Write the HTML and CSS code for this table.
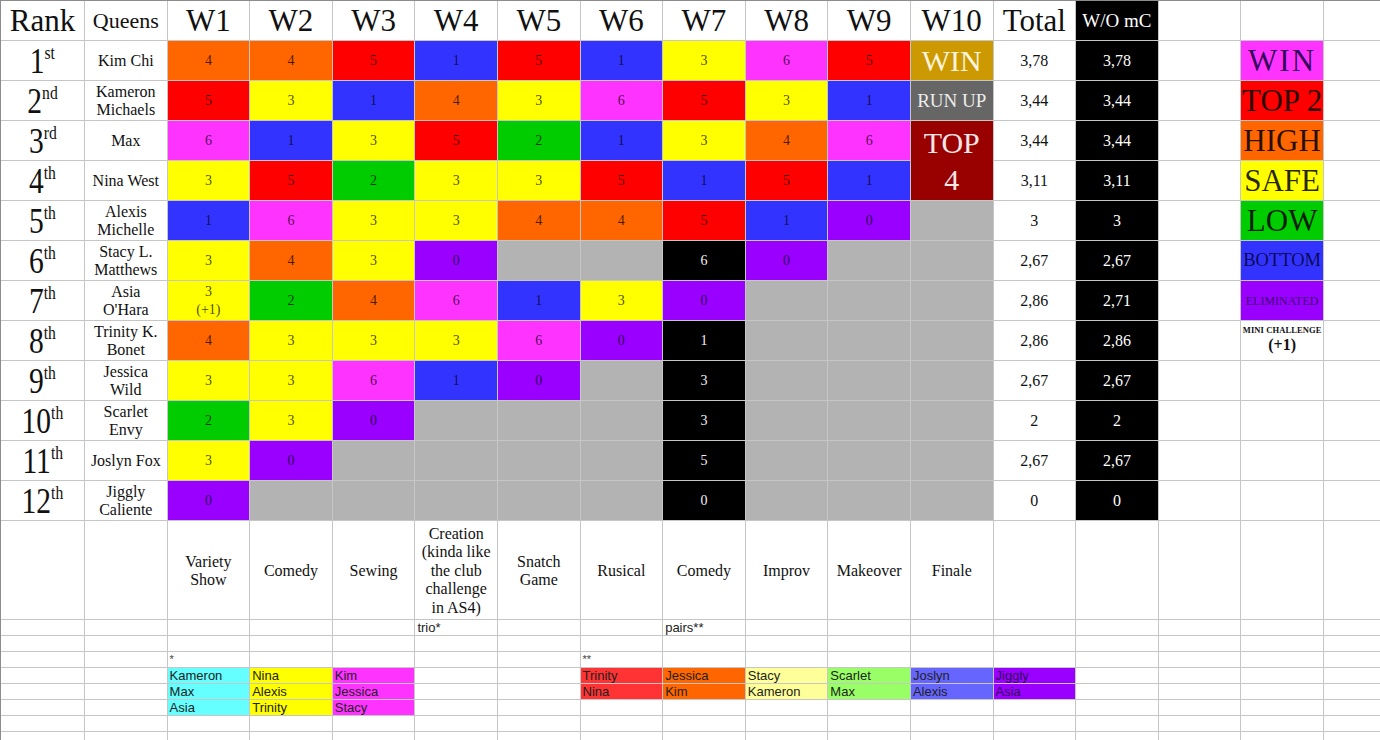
FILE: index.html
```html
<!DOCTYPE html>
<html lang="en">
<head>
<meta charset="utf-8">
<title>Drag Race Tracker</title>
<link rel="stylesheet" href="styles.css">
</head>
<body>
<div class="sheet">
  <!-- header -->
  <div class="c hd">Rank</div><div class="c hq">Queens</div>
  <div class="c hd">W1</div><div class="c hd">W2</div><div class="c hd">W3</div><div class="c hd">W4</div><div class="c hd">W5</div><div class="c hd">W6</div><div class="c hd">W7</div><div class="c hd">W8</div><div class="c hd">W9</div><div class="c hd">W10</div>
  <div class="c hd">Total</div><div class="c bk hwo">W/O mC</div><div class="c"></div><div class="c"></div><div class="c"></div>

  <!-- 1 -->
  <div class="c rk"><span class="rn">1<sup>st</sup></span></div><div class="c nm">Kim Chi</div>
  <div class="c n or">4</div><div class="c n or">4</div><div class="c n rd">5</div><div class="c n bl">1</div><div class="c n rd">5</div><div class="c n bl">1</div><div class="c n ye">3</div><div class="c n mg">6</div><div class="c n rd">5</div>
  <div class="c win10">WIN</div><div class="c tot">3,78</div><div class="c tot bk">3,78</div><div class="c"></div><div class="c lg mg lwin">WIN</div><div class="c"></div>

  <!-- 2 -->
  <div class="c rk"><span class="rn">2<sup>nd</sup></span></div><div class="c nm">Kameron<br>Michaels</div>
  <div class="c n rd">5</div><div class="c n ye">3</div><div class="c n bl">1</div><div class="c n or">4</div><div class="c n ye">3</div><div class="c n mg">6</div><div class="c n rd">5</div><div class="c n ye">3</div><div class="c n bl">1</div>
  <div class="c runup">RUN UP</div><div class="c tot">3,44</div><div class="c tot bk">3,44</div><div class="c"></div><div class="c lg rd">TOP 2</div><div class="c"></div>

  <!-- 3 -->
  <div class="c rk"><span class="rn">3<sup>rd</sup></span></div><div class="c nm">Max</div>
  <div class="c n mg">6</div><div class="c n bl">1</div><div class="c n ye">3</div><div class="c n rd">5</div><div class="c n gr">2</div><div class="c n bl">1</div><div class="c n ye">3</div><div class="c n or">4</div><div class="c n mg">6</div>
  <div class="c top4">TOP<br>4</div><div class="c tot">3,44</div><div class="c tot bk">3,44</div><div class="c"></div><div class="c lg or">HIGH</div><div class="c"></div>

  <!-- 4 -->
  <div class="c rk"><span class="rn">4<sup>th</sup></span></div><div class="c nm">Nina West</div>
  <div class="c n ye">3</div><div class="c n rd">5</div><div class="c n gr">2</div><div class="c n ye">3</div><div class="c n ye">3</div><div class="c n rd">5</div><div class="c n bl">1</div><div class="c n rd">5</div><div class="c n bl">1</div>
  <div class="c tot">3,11</div><div class="c tot bk">3,11</div><div class="c"></div><div class="c lg ye">SAFE</div><div class="c"></div>

  <!-- 5 -->
  <div class="c rk"><span class="rn">5<sup>th</sup></span></div><div class="c nm">Alexis<br>Michelle</div>
  <div class="c n bl">1</div><div class="c n mg">6</div><div class="c n ye">3</div><div class="c n ye">3</div><div class="c n or">4</div><div class="c n or">4</div><div class="c n rd">5</div><div class="c n bl">1</div><div class="c n pu">0</div>
  <div class="c gy"></div><div class="c tot">3</div><div class="c tot bk">3</div><div class="c"></div><div class="c lg gr">LOW</div><div class="c"></div>

  <!-- 6 -->
  <div class="c rk"><span class="rn">6<sup>th</sup></span></div><div class="c nm">Stacy L.<br>Matthews</div>
  <div class="c n ye">3</div><div class="c n or">4</div><div class="c n ye">3</div><div class="c n pu">0</div><div class="c gy"></div><div class="c gy"></div><div class="c n bk">6</div><div class="c n pu">0</div><div class="c gy"></div>
  <div class="c gy"></div><div class="c tot">2,67</div><div class="c tot bk">2,67</div><div class="c"></div><div class="c lg bl lbot">BOTTOM</div><div class="c"></div>

  <!-- 7 -->
  <div class="c rk"><span class="rn">7<sup>th</sup></span></div><div class="c nm">Asia<br>O'Hara</div>
  <div class="c n ye two">3<br>(+1)</div><div class="c n gr">2</div><div class="c n or">4</div><div class="c n mg">6</div><div class="c n bl">1</div><div class="c n ye">3</div><div class="c n pu">0</div><div class="c gy"></div><div class="c gy"></div>
  <div class="c gy"></div><div class="c tot">2,86</div><div class="c tot bk">2,71</div><div class="c"></div><div class="c lg pu lelim">ELIMINATED</div><div class="c"></div>

  <!-- 8 -->
  <div class="c rk"><span class="rn">8<sup>th</sup></span></div><div class="c nm">Trinity K.<br>Bonet</div>
  <div class="c n or">4</div><div class="c n ye">3</div><div class="c n ye">3</div><div class="c n ye">3</div><div class="c n mg">6</div><div class="c n pu">0</div><div class="c n bk">1</div><div class="c gy"></div><div class="c gy"></div>
  <div class="c gy"></div><div class="c tot">2,86</div><div class="c tot bk">2,86</div><div class="c"></div><div class="c lmini"><span class="mc">MINI CHALLENGE</span><span class="p1">(+1)</span></div><div class="c"></div>

  <!-- 9 -->
  <div class="c rk"><span class="rn">9<sup>th</sup></span></div><div class="c nm">Jessica<br>Wild</div>
  <div class="c n ye">3</div><div class="c n ye">3</div><div class="c n mg">6</div><div class="c n bl">1</div><div class="c n pu">0</div><div class="c gy"></div><div class="c n bk">3</div><div class="c gy"></div><div class="c gy"></div>
  <div class="c gy"></div><div class="c tot">2,67</div><div class="c tot bk">2,67</div><div class="c"></div><div class="c"></div><div class="c"></div>

  <!-- 10 -->
  <div class="c rk"><span class="rn">10<sup>th</sup></span></div><div class="c nm">Scarlet<br>Envy</div>
  <div class="c n gr">2</div><div class="c n ye">3</div><div class="c n pu">0</div><div class="c gy"></div><div class="c gy"></div><div class="c gy"></div><div class="c n bk">3</div><div class="c gy"></div><div class="c gy"></div>
  <div class="c gy"></div><div class="c tot">2</div><div class="c tot bk">2</div><div class="c"></div><div class="c"></div><div class="c"></div>

  <!-- 11 -->
  <div class="c rk"><span class="rn">11<sup>th</sup></span></div><div class="c nm">Joslyn Fox</div>
  <div class="c n ye">3</div><div class="c n pu">0</div><div class="c gy"></div><div class="c gy"></div><div class="c gy"></div><div class="c gy"></div><div class="c n bk">5</div><div class="c gy"></div><div class="c gy"></div>
  <div class="c gy"></div><div class="c tot">2,67</div><div class="c tot bk">2,67</div><div class="c"></div><div class="c"></div><div class="c"></div>

  <!-- 12 -->
  <div class="c rk"><span class="rn">12<sup>th</sup></span></div><div class="c nm">Jiggly<br>Caliente</div>
  <div class="c n pu">0</div><div class="c gy"></div><div class="c gy"></div><div class="c gy"></div><div class="c gy"></div><div class="c gy"></div><div class="c n bk">0</div><div class="c gy"></div><div class="c gy"></div>
  <div class="c gy"></div><div class="c tot">0</div><div class="c tot bk">0</div><div class="c"></div><div class="c"></div><div class="c"></div>

  <!-- challenges -->
  <div class="c"></div><div class="c"></div>
  <div class="c ch">Variety<br>Show</div><div class="c ch">Comedy</div><div class="c ch">Sewing</div><div class="c ch">Creation<br>(kinda like<br>the club<br>challenge<br>in AS4)</div><div class="c ch">Snatch<br>Game</div><div class="c ch">Rusical</div><div class="c ch">Comedy</div><div class="c ch">Improv</div><div class="c ch">Makeover</div><div class="c ch">Finale</div>
  <div class="c"></div><div class="c"></div><div class="c"></div><div class="c"></div><div class="c"></div>

  <!-- notes row -->
  <div class="t"></div><div class="t"></div><div class="t"></div><div class="t"></div><div class="t"></div><div class="t">trio*</div><div class="t"></div><div class="t"></div><div class="t">pairs**</div><div class="t"></div><div class="t"></div><div class="t"></div><div class="t"></div><div class="t"></div><div class="t"></div><div class="t"></div><div class="t"></div>

  <!-- empty row -->
  <div class="t"></div><div class="t"></div><div class="t"></div><div class="t"></div><div class="t"></div><div class="t"></div><div class="t"></div><div class="t"></div><div class="t"></div><div class="t"></div><div class="t"></div><div class="t"></div><div class="t"></div><div class="t"></div><div class="t"></div><div class="t"></div><div class="t"></div>

  <!-- asterisks -->
  <div class="t"></div><div class="t"></div><div class="t ast">*</div><div class="t"></div><div class="t"></div><div class="t"></div><div class="t"></div><div class="t ast">**</div><div class="t"></div><div class="t"></div><div class="t"></div><div class="t"></div><div class="t"></div><div class="t"></div><div class="t"></div><div class="t"></div><div class="t"></div>

  <!-- groups 1 -->
  <div class="t"></div><div class="t"></div><div class="t cy">Kameron</div><div class="t ye">Nina</div><div class="t mg">Kim</div><div class="t"></div><div class="t"></div><div class="t lr">Trinity</div><div class="t or">Jessica</div><div class="t ly">Stacy</div><div class="t lgn">Scarlet</div><div class="t pw">Joslyn</div><div class="t pu">Jiggly</div><div class="t"></div><div class="t"></div><div class="t"></div><div class="t"></div>

  <!-- groups 2 -->
  <div class="t"></div><div class="t"></div><div class="t cy">Max</div><div class="t ye">Alexis</div><div class="t mg">Jessica</div><div class="t"></div><div class="t"></div><div class="t lr">Nina</div><div class="t or">Kim</div><div class="t ly">Kameron</div><div class="t lgn">Max</div><div class="t pw">Alexis</div><div class="t pu">Asia</div><div class="t"></div><div class="t"></div><div class="t"></div><div class="t"></div>

  <!-- groups 3 -->
  <div class="t"></div><div class="t"></div><div class="t cy">Asia</div><div class="t ye">Trinity</div><div class="t mg">Stacy</div><div class="t"></div><div class="t"></div><div class="t"></div><div class="t"></div><div class="t"></div><div class="t"></div><div class="t"></div><div class="t"></div><div class="t"></div><div class="t"></div><div class="t"></div><div class="t"></div>

  <!-- empty rows -->
  <div class="t"></div><div class="t"></div><div class="t"></div><div class="t"></div><div class="t"></div><div class="t"></div><div class="t"></div><div class="t"></div><div class="t"></div><div class="t"></div><div class="t"></div><div class="t"></div><div class="t"></div><div class="t"></div><div class="t"></div><div class="t"></div><div class="t"></div>
  <div class="t"></div><div class="t"></div><div class="t"></div><div class="t"></div><div class="t"></div><div class="t"></div><div class="t"></div><div class="t"></div><div class="t"></div><div class="t"></div><div class="t"></div><div class="t"></div><div class="t"></div><div class="t"></div><div class="t"></div><div class="t"></div><div class="t"></div>
</div>
</body>
</html>
```

FILE: styles.css
```css
html, body {
  margin: 0;
  padding: 0;
  background: #fff;
  overflow: hidden;
}

.sheet {
  display: grid;
  grid-template-columns: 83px repeat(15, 81.6px) 1fr;
  grid-template-rows: repeat(13, 39px) 98px repeat(8, 15px);
  gap: 1px;
  width: 1379px;
  background: #c6c6c6;
  border-top: 1px solid #8c8c8c;
  border-left: 1px solid #8c8c8c;
  font-family: "Liberation Serif", "Times New Roman", serif;
  color: #111;
}

.c {
  background: #fff;
  display: flex;
  align-items: center;
  justify-content: center;
  text-align: center;
  font-size: 14px;
  line-height: 1;
  overflow: hidden;
  min-width: 0;
}

/* header */
.hd { font-size: 31px; }
.hq { font-size: 22px; }
.hwo { font-size: 19px; }

/* rank */
.rk { font-size: 36px; }
.rn {
  display: inline-block;
  transform: scaleX(0.82);
  line-height: 1;
  white-space: nowrap;
}
.rn sup {
  font-size: 19px;
  line-height: 0;
  vertical-align: 14px;
}

/* names */
.nm {
  font-size: 16px;
  line-height: 17.5px;
}

/* numbers */
.n { color: rgba(0, 0, 0, 0.72); }
.two { font-size: 14px; line-height: 18px; }
.tot { font-size: 16px; }

/* colours */
.or { background: #ff6600; }
.rd { background: #ff0000; }
.bl { background: #3333ff; }
.ye { background: #ffff00; }
.mg { background: #ff33ff; }
.gr { background: #00cc00; }
.pu { background: #9900ff; }
.gy { background: #b3b3b3; }
.bk { background: #000; color: #fff; }
.n.bk { color: #f2f2f2; }

/* finale */
.win10 {
  background: #cc9900;
  color: #fbf3dc;
  font-size: 30px;
}
.runup {
  background: #666666;
  color: #ececec;
  font-size: 19px;
}
.top4 {
  grid-row: span 2;
  background: #990000;
  color: #f6e6e6;
  font-size: 30px;
  line-height: 37px;
}

/* legend */
.lg {
  font-size: 31px;
  color: rgba(0, 0, 0, 0.85);
}
.lwin { letter-spacing: 2px; color: rgba(10, 0, 60, 0.85); }
.lbot { font-size: 18.5px; color: rgba(0, 0, 40, 0.8); }
.lelim { font-size: 12px; color: rgba(20, 0, 40, 0.7); }
.lmini {
  flex-direction: column;
  justify-content: flex-start;
  padding-top: 5px;
  box-sizing: border-box;
  font-weight: bold;
}
.mc { font-size: 8.5px; letter-spacing: 0.1px; }
.p1 { font-size: 16px; margin-top: 2px; }

/* challenges */
.ch {
  font-size: 16px;
  line-height: 18.5px;
  padding-top: 2px;
  box-sizing: border-box;
}

/* lower small rows */
.t {
  background: #fff;
  font-family: "Liberation Sans", Arial, sans-serif;
  font-size: 13px;
  line-height: 15px;
  color: #222;
  padding-left: 2px;
  white-space: nowrap;
  overflow: hidden;
  min-width: 0;
}
.t.ast { font-size: 11px; color: #444; }
.t.cy { background: #66ffff; }
.t.ye { background: #ffff00; }
.t.mg { background: #ff33ff; }
.t.lr { background: #ff3333; }
.t.or { background: #ff6600; }
.t.ly { background: #ffff99; }
.t.lgn { background: #99ff66; }
.t.pw { background: #6666ff; }
.t.pu { background: #9900ff; color: rgba(0, 0, 0, 0.7); }
```
